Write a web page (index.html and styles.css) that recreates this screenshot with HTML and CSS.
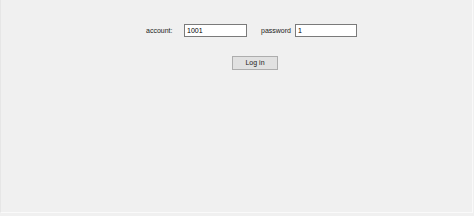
FILE: index.html
```html
<!DOCTYPE html>
<html lang="en">
<head>
    <meta charset="UTF-8">
    <title>Login</title>
    <link rel="stylesheet" href="styles.css">
</head>
<body>
    <div class="window">
        <div class="login-row">
            <label class="field-label account-label" for="account">account:</label>
            <input class="field-input" id="account" type="text" value="1001">
            <label class="field-label password-label" for="password">password</label>
            <input class="field-input" id="password" type="text" value="1">
        </div>
        <div class="button-row">
            <button class="login-btn">Log in</button>
        </div>
    </div>
</body>
</html>
```

FILE: styles.css
```css
html, body {
    margin: 0;
    padding: 0;
    background-color: #f0f0f0;
}
body {
    font-family: 'Liberation Sans', Arial, sans-serif;
    font-size: 7px;
    color: #000;
}
.window {
    width: 471px;
    height: 212px;
    border-left: 1px solid #e6e6e6;
    border-right: 1px solid #fafafa;
    border-bottom: 1px solid #fafafa;
    box-sizing: content-box;
}
.login-row {
    display: flex;
    align-items: center;
    padding-top: 24px;
    padding-left: 145px;
    height: 13px;
}
.field-label {
    display: block;
    line-height: 13px;
    color: #1a1a1a;
}
.account-label {
    width: 38px;
}
.password-label {
    width: 34px;
    margin-left: 14px;
}
.field-input {
    box-sizing: border-box;
    height: 13px;
    padding: 0 2px;
    margin: 0;
    border: 1px solid #7a7a7a;
    background-color: #fff;
    font-family: 'Liberation Sans', Arial, sans-serif;
    font-size: 7px;
    color: #000;
    outline: none;
}
#account {
    width: 63px;
}
#password {
    width: 62px;
}
.button-row {
    padding-top: 19px;
    padding-left: 231px;
}
.login-btn {
    box-sizing: border-box;
    width: 46px;
    height: 14px;
    padding: 0;
    border: 1px solid #adadad;
    background-color: #e1e1e1;
    font-family: 'Liberation Sans', Arial, sans-serif;
    font-size: 7px;
    font-weight: normal;
    color: #1a1a1a;
    line-height: 12px;
}
```
